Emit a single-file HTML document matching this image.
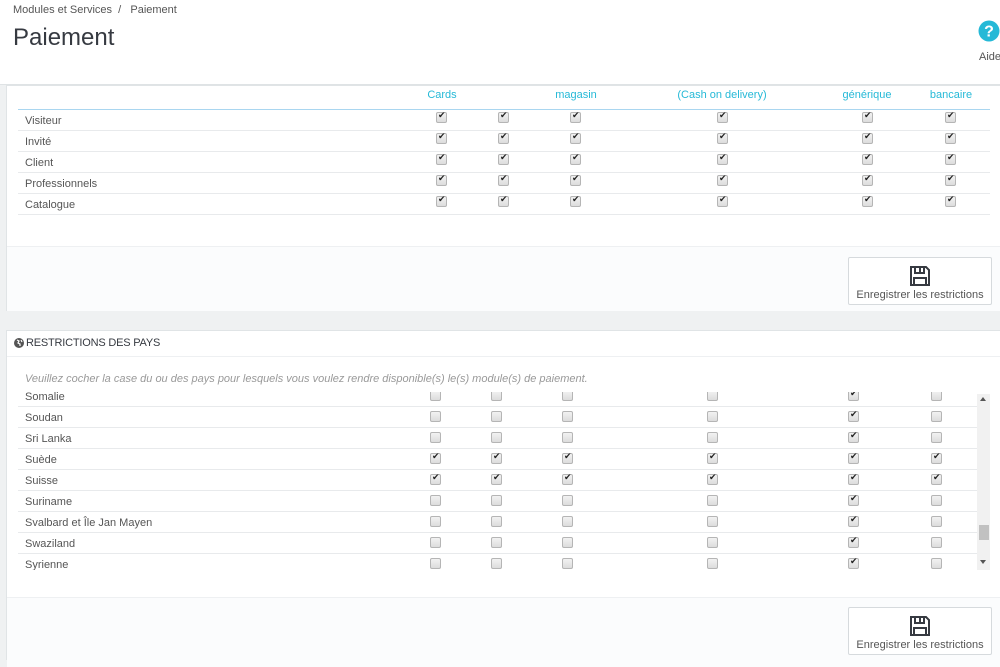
<!DOCTYPE html>
<html><head><meta charset="utf-8"><style>
*{margin:0;padding:0;box-sizing:border-box}
body{width:1000px;height:655px;overflow:hidden;background:#eff1f2;font-family:"Liberation Sans",sans-serif;color:#555;position:relative;font-size:11px}
.a{position:absolute}
.hdr{left:0;top:0;width:1000px;height:85px;background:#fff;border-bottom:1px solid #dfe3e5}
.panel{background:#fff;border:1px solid #e0e4e6;left:6px;width:1000px}
.foot{background:#fbfcfd;border-top:1px solid #eef0f2}
.cb{position:absolute;width:11px;height:11px;border:1px solid #b5b5b5;border-radius:2px;background:linear-gradient(#f2f2f2,#dcdcdc)}
.cb.c::after{content:"✔";position:absolute;left:1px;top:-3px;font-size:9px;color:#222}
.row{position:absolute;height:21px;border-bottom:1px solid #e8eaec}
.row span{position:absolute;left:7px;top:5px;font-size:11px;color:#555}
.th{position:absolute;top:89px;color:#25b9d7;font-size:11px;transform:translateX(-50%);white-space:nowrap}
.btn{background:#fff;border:1px solid #d6dadd;border-radius:2px;width:144px;height:48px;text-align:center;font-size:11px;color:#555}
</style></head><body>
<div class="a hdr">
<div class="a" style="left:13px;top:4px;font-size:11px;color:#555">Modules et Services &nbsp;/&nbsp;&nbsp; Paiement</div>
<div class="a" style="left:13px;top:24px;font-size:24px;color:#363a41">Paiement</div>
<svg class="a" style="left:978px;top:20px" width="22" height="22" viewBox="0 0 22 22"><circle cx="11" cy="11" r="10.5" fill="#25b9d7"/><text x="11" y="16.5" text-anchor="middle" font-family="Liberation Sans" font-weight="bold" font-size="16" fill="#fff">?</text></svg>
<div class="a" style="left:979px;top:51px;font-size:11px;color:#555">Aide</div>
</div>

<div class="a panel" style="top:85px;height:226px">
<div class="a foot" style="left:0;top:160px;width:1000px;height:65px"></div>
<div class="a btn" style="left:841px;top:171px"><svg style="margin-top:7px" width="22" height="22" viewBox="0 0 22 22" fill="none" stroke="#363a41" stroke-width="2"><path d="M2 2h15l3 3v15H2z"/><path d="M6 2v6h9V2M11 3v4"/><path d="M5 20v-7h12v7"/></svg><div style="margin-top:-1px">Enregistrer les restrictions</div></div>
</div>
<div class="th" style="left:442px">Cards</div>
<div class="th" style="left:576px">magasin</div>
<div class="th" style="left:722px">(Cash on delivery)</div>
<div class="th" style="left:867px">générique</div>
<div class="th" style="left:951px">bancaire</div>
<div class="a" style="left:18px;top:109px;width:972px;height:1px;background:#a9d6f0"></div>
<div class="row" style="left:18px;top:110px;width:972px"><span>Visiteur</span></div>
<div class="row" style="left:18px;top:131px;width:972px"><span>Invité</span></div>
<div class="row" style="left:18px;top:152px;width:972px"><span>Client</span></div>
<div class="row" style="left:18px;top:173px;width:972px"><span>Professionnels</span></div>
<div class="row" style="left:18px;top:194px;width:972px"><span>Catalogue</span></div>
<div class="cb c" style="left:436px;top:112px"></div><div class="cb c" style="left:498px;top:112px"></div><div class="cb c" style="left:570px;top:112px"></div><div class="cb c" style="left:717px;top:112px"></div><div class="cb c" style="left:862px;top:112px"></div><div class="cb c" style="left:945px;top:112px"></div>
<div class="cb c" style="left:436px;top:133px"></div><div class="cb c" style="left:498px;top:133px"></div><div class="cb c" style="left:570px;top:133px"></div><div class="cb c" style="left:717px;top:133px"></div><div class="cb c" style="left:862px;top:133px"></div><div class="cb c" style="left:945px;top:133px"></div>
<div class="cb c" style="left:436px;top:154px"></div><div class="cb c" style="left:498px;top:154px"></div><div class="cb c" style="left:570px;top:154px"></div><div class="cb c" style="left:717px;top:154px"></div><div class="cb c" style="left:862px;top:154px"></div><div class="cb c" style="left:945px;top:154px"></div>
<div class="cb c" style="left:436px;top:175px"></div><div class="cb c" style="left:498px;top:175px"></div><div class="cb c" style="left:570px;top:175px"></div><div class="cb c" style="left:717px;top:175px"></div><div class="cb c" style="left:862px;top:175px"></div><div class="cb c" style="left:945px;top:175px"></div>
<div class="cb c" style="left:436px;top:196px"></div><div class="cb c" style="left:498px;top:196px"></div><div class="cb c" style="left:570px;top:196px"></div><div class="cb c" style="left:717px;top:196px"></div><div class="cb c" style="left:862px;top:196px"></div><div class="cb c" style="left:945px;top:196px"></div>

<div class="a panel" style="top:330px;height:330px">
<div class="a" style="left:0;top:0;width:1000px;height:26px;border-bottom:1px solid #eef0f2"></div>
<svg class="a" style="left:7px;top:7px" width="10" height="10" viewBox="0 0 10 10"><circle cx="5" cy="5" r="5" fill="#555"/><path d="M3 2l2 1-1 2 2 1 0 2M7 2l1 2" stroke="#fff" stroke-width="1.2" fill="none"/></svg>
<div class="a" style="left:19px;top:6px;font-size:11px;color:#363a41;letter-spacing:-0.2px">RESTRICTIONS DES PAYS</div>
<div class="a" style="left:18px;top:42px;font-size:11px;font-style:italic;color:#999">Veuillez cocher la case du ou des pays pour lesquels vous voulez rendre disponible(s) le(s) module(s) de paiement.</div>
<div class="a foot" style="left:0;top:266px;width:1000px;height:70px"></div>
<div class="a btn" style="left:841px;top:276px"><svg style="margin-top:7px" width="22" height="22" viewBox="0 0 22 22" fill="none" stroke="#363a41" stroke-width="2"><path d="M2 2h15l3 3v15H2z"/><path d="M6 2v6h9V2M11 3v4"/><path d="M5 20v-7h12v7"/></svg><div style="margin-top:-1px">Enregistrer les restrictions</div></div>
</div>

<div class="a" style="left:18px;top:392px;width:960px;height:178px;overflow:hidden">
<div class="row" style="left:0;top:-6px;width:960px"><span>Somalie</span><div class="cb" style="left:412px;top:4px"></div><div class="cb" style="left:473px;top:4px"></div><div class="cb" style="left:544px;top:4px"></div><div class="cb" style="left:689px;top:4px"></div><div class="cb c" style="left:830px;top:4px"></div><div class="cb" style="left:913px;top:4px"></div></div>
<div class="row" style="left:0;top:15px;width:960px"><span>Soudan</span><div class="cb" style="left:412px;top:4px"></div><div class="cb" style="left:473px;top:4px"></div><div class="cb" style="left:544px;top:4px"></div><div class="cb" style="left:689px;top:4px"></div><div class="cb c" style="left:830px;top:4px"></div><div class="cb" style="left:913px;top:4px"></div></div>
<div class="row" style="left:0;top:36px;width:960px"><span>Sri Lanka</span><div class="cb" style="left:412px;top:4px"></div><div class="cb" style="left:473px;top:4px"></div><div class="cb" style="left:544px;top:4px"></div><div class="cb" style="left:689px;top:4px"></div><div class="cb c" style="left:830px;top:4px"></div><div class="cb" style="left:913px;top:4px"></div></div>
<div class="row" style="left:0;top:57px;width:960px"><span>Suède</span><div class="cb c" style="left:412px;top:4px"></div><div class="cb c" style="left:473px;top:4px"></div><div class="cb c" style="left:544px;top:4px"></div><div class="cb c" style="left:689px;top:4px"></div><div class="cb c" style="left:830px;top:4px"></div><div class="cb c" style="left:913px;top:4px"></div></div>
<div class="row" style="left:0;top:78px;width:960px"><span>Suisse</span><div class="cb c" style="left:412px;top:4px"></div><div class="cb c" style="left:473px;top:4px"></div><div class="cb c" style="left:544px;top:4px"></div><div class="cb c" style="left:689px;top:4px"></div><div class="cb c" style="left:830px;top:4px"></div><div class="cb c" style="left:913px;top:4px"></div></div>
<div class="row" style="left:0;top:99px;width:960px"><span>Suriname</span><div class="cb" style="left:412px;top:4px"></div><div class="cb" style="left:473px;top:4px"></div><div class="cb" style="left:544px;top:4px"></div><div class="cb" style="left:689px;top:4px"></div><div class="cb c" style="left:830px;top:4px"></div><div class="cb" style="left:913px;top:4px"></div></div>
<div class="row" style="left:0;top:120px;width:960px"><span>Svalbard et Île Jan Mayen</span><div class="cb" style="left:412px;top:4px"></div><div class="cb" style="left:473px;top:4px"></div><div class="cb" style="left:544px;top:4px"></div><div class="cb" style="left:689px;top:4px"></div><div class="cb c" style="left:830px;top:4px"></div><div class="cb" style="left:913px;top:4px"></div></div>
<div class="row" style="left:0;top:141px;width:960px"><span>Swaziland</span><div class="cb" style="left:412px;top:4px"></div><div class="cb" style="left:473px;top:4px"></div><div class="cb" style="left:544px;top:4px"></div><div class="cb" style="left:689px;top:4px"></div><div class="cb c" style="left:830px;top:4px"></div><div class="cb" style="left:913px;top:4px"></div></div>
<div class="row" style="left:0;top:162px;width:960px;border:none"><span>Syrienne</span><div class="cb" style="left:412px;top:4px"></div><div class="cb" style="left:473px;top:4px"></div><div class="cb" style="left:544px;top:4px"></div><div class="cb" style="left:689px;top:4px"></div><div class="cb c" style="left:830px;top:4px"></div><div class="cb" style="left:913px;top:4px"></div></div>
</div>
<div class="a" style="left:977px;top:394px;width:13px;height:176px;background:#f1f1f1"></div>
<div class="a" style="left:980px;top:397px;width:0;height:0;border:3.5px solid transparent;border-bottom:4px solid #555;border-top:none"></div>
<div class="a" style="left:980px;top:560px;width:0;height:0;border:3.5px solid transparent;border-top:4px solid #555;border-bottom:none"></div>
<div class="a" style="left:979px;top:525px;width:10px;height:15px;background:#c1c1c1"></div>
</body></html>
